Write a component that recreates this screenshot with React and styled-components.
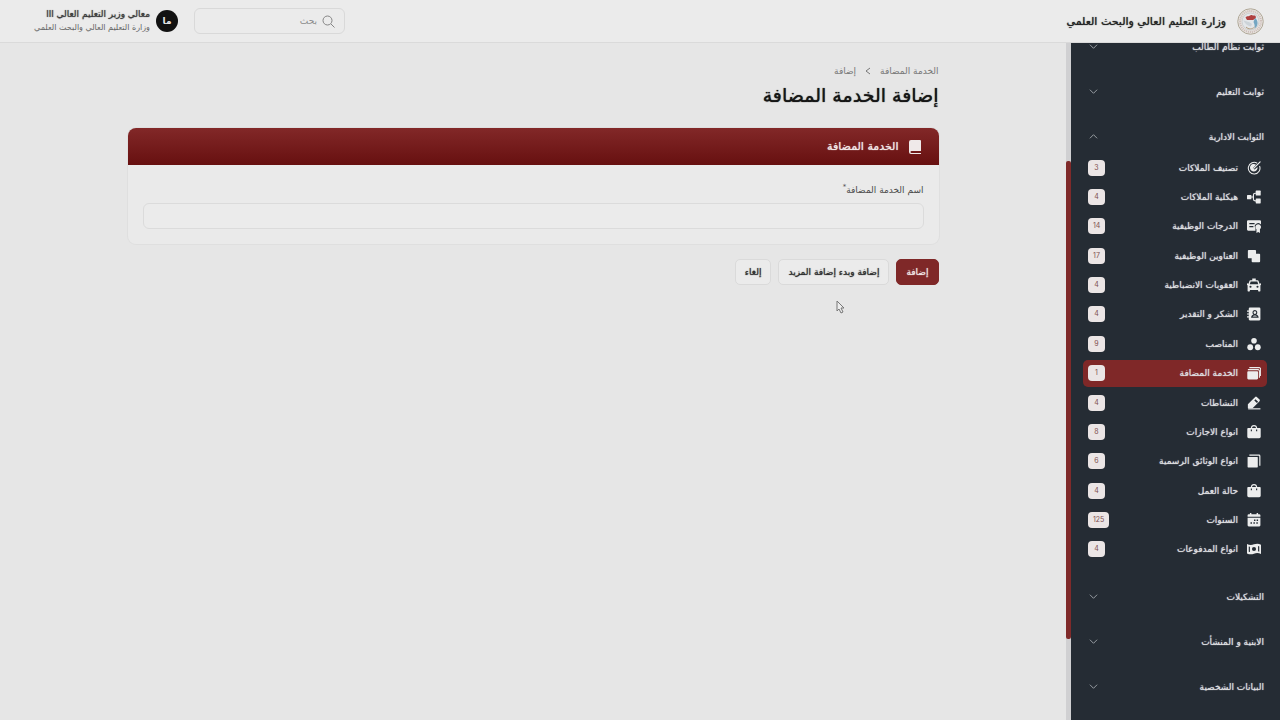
import React from 'react';
import styled, { createGlobalStyle } from 'styled-components';

const before = [
  { label: 'ثوابت نظام الطالب' },
  { label: 'ثوابت التعليم' },
  { label: 'الثوابت الادارية', open: true },
];

const after = [
  { label: 'التشكيلات' },
  { label: 'الابنية و المنشأت' },
  { label: 'البيانات الشخصية' },
];

const items = [
  { label: 'تصنيف الملاكات', icon: 'target', count: 3 },
  { label: 'هيكلية الملاكات', icon: 'tree', count: 4 },
  { label: 'الدرجات الوظيفية', icon: 'certificate', count: 14 },
  { label: 'العناوين الوظيفية', icon: 'union', count: 17 },
  { label: 'العقوبات الانضباطية', icon: 'taxi', count: 4 },
  { label: 'الشكر و التقدير', icon: 'contact', count: 4 },
  { label: 'المناصب', icon: 'circles', count: 9 },
  { label: 'الخدمة المضافة', icon: 'folders', count: 1, active: true },
  { label: 'النشاطات', icon: 'pen', count: 4 },
  { label: 'انواع الاجازات', icon: 'bag', count: 8 },
  { label: 'انواع الوثائق الرسمية', icon: 'stack', count: 6 },
  { label: 'حالة العمل', icon: 'bag', count: 4 },
  { label: 'السنوات', icon: 'calendar', count: 125 },
  { label: 'انواع المدفوعات', icon: 'money', count: 4 },
];

const shapes = {
  target: (
    <>
      <path d="M17.500 3.800A10 10 0 1 0 21.500 8.500" fill="none" stroke="currentColor" strokeWidth="1.800" />
      <path d="M15.500 6.300A6.500 6.500 0 1 0 18 10.300L13 14.500 10 12.500z" />
      <path d="M11.500 12.500 22.500 1.500" stroke="currentColor" strokeWidth="2" strokeLinecap="round" />
    </>
  ),
  tree: (
    <>
      <rect x="0" y="8.500" width="7.500" height="7.500" rx="1" />
      <rect x="15" y="1" width="8.500" height="8.500" rx="1" />
      <rect x="15" y="14.500" width="8.500" height="8.500" rx="1" />
      <path d="M6 12h5M16 5.500h-2a3 3 0 0 0-3 3v7a3 3 0 0 0 3 3h2" fill="none" stroke="currentColor" strokeWidth="2" />
    </>
  ),
  certificate: (
    <>
      <path fillRule="evenodd" d="M2 2h20a2 2 0 0 1 2 2v5.500a5.600 5.600 0 0 0-9.500 6.500v4H2a2 2 0 0 1-2-2V4a2 2 0 0 1 2-2zm2 5v2h9V7zm0 5v2h7v-2z" />
      <path d="M19.200 9a4.800 4.800 0 0 1 3 8.500V24l-3-1.800-3 1.800v-6.500a4.800 4.800 0 0 1 3-8.500z" />
    </>
  ),
  union: <path d="M3 1.500h11a1.500 1.500 0 0 1 1.500 1.500v5H21a1.500 1.500 0 0 1 1.500 1.500V21a1.500 1.500 0 0 1-1.500 1.500H9.500A1.500 1.500 0 0 1 8 21v-5H3a1.500 1.500 0 0 1-1.500-1.500V3A1.500 1.500 0 0 1 3 1.500z" />,
  taxi: (
    <path
      fillRule="evenodd"
      d="M9 1h6v3h3a2 2 0 0 1 2 1.500L21.500 10 24 9v3l-1 .5V22a1 1 0 0 1-1 1h-2a1 1 0 0 1-1-1v-1.500H5V22a1 1 0 0 1-1 1H2a1 1 0 0 1-1-1v-9.500L0 12V9l2.500 1L4 5.500A2 2 0 0 1 6 4h3zM6.300 6 4.800 10.500h14.400L17.700 6zM6 13.200a1.800 1.800 0 1 0 0 3.600 1.800 1.800 0 0 0 0-3.600zm12 0a1.800 1.800 0 1 0 0 3.600 1.800 1.800 0 0 0 0-3.600z"
    />
  ),
  contact: (
    <>
      <path fillRule="evenodd" d="M5 1h16a2 2 0 0 1 2 2v18a2 2 0 0 1-2 2H5a2 2 0 0 1-2-2V3a2 2 0 0 1 2-2zm8.500 4A4.500 4.500 0 0 0 11 13c-2.500 1-4 3-4 5.500h13c0-2.500-1.500-4.500-4-5.500a4.500 4.500 0 0 0-2.500-8zm0 2.200a2.300 2.300 0 1 1 0 4.600 2.300 2.300 0 0 1 0-4.600zm0 7.300c1.800 0 3 .6 3.700 1.800H9.800c.7-1.200 1.900-1.800 3.700-1.800z" />
      <path d="M0 7h4M0 12h4M0 17h4" stroke="currentColor" strokeWidth="2" />
    </>
  ),
  circles: (
    <>
      <circle cx="12" cy="6.500" r="4.800" />
      <circle cx="5.500" cy="17.500" r="5" />
      <circle cx="18.500" cy="17.500" r="5" />
    </>
  ),
  folders: (
    <>
      <path d="M2 9h15.500a1.500 1.500 0 0 1 1.500 1.500V21a2 2 0 0 1-2 2H2.500a2 2 0 0 1-2-2V10.500A1.500 1.500 0 0 1 2 9z" />
      <path d="M1.500 6.200H19a2.300 2.300 0 0 1 2.300 2.300V20M4 2.800h17a2.300 2.300 0 0 1 2.300 2.300V17" fill="none" stroke="currentColor" strokeWidth="1.800" />
    </>
  ),
  pen: (
    <>
      <path fillRule="evenodd" d="M14 1.500a2 2 0 0 1 2.800 0l4.700 4.700a2 2 0 0 1 0 2.800L9.500 21H1.500v-7zm.5 4-2 2 4.500 4.500 2-2z" />
      <path d="M2 22h21" stroke="currentColor" strokeWidth="2" />
    </>
  ),
  bag: (
    <path
      fillRule="evenodd"
      d="M12 0a5.500 5.500 0 0 1 5.500 5H22a1.500 1.500 0 0 1 1.500 1.500V20a2.500 2.500 0 0 1-2.500 2.500H3A2.500 2.500 0 0 1 .5 20V6.500A1.500 1.500 0 0 1 2 5h4.500A5.500 5.500 0 0 1 12 0zm0 2a3.500 3.500 0 0 0-3.500 3h7A3.500 3.500 0 0 0 12 2zM6.500 7.500v3h2v-3zm9 0v3h2v-3z"
    />
  ),
  stack: (
    <>
      <rect x="1" y="5" width="17.500" height="18" rx="1" />
      <path d="M4 2h16.500a1.500 1.500 0 0 1 1.500 1.500V20" fill="none" stroke="currentColor" strokeWidth="2" />
    </>
  ),
  calendar: (
    <path
      fillRule="evenodd"
      d="M5 0h2.500v2h9V0H19v2h2a2 2 0 0 1 2 2v2.500H1V4a2 2 0 0 1 2-2h2zM1 8h22v13a2 2 0 0 1-2 2H3a2 2 0 0 1-2-2zm11 3v2.500h2.500V11zm4.500 0v2.500H19V11zM6 16v2.500h2.500V16zm5 0v2.500h2.500V16zm5 0v2.500h2.500V16z"
    />
  ),
  money: (
    <path
      fillRule="evenodd"
      d="M0 3.500c4 2 8 2 12 .500s8-1.500 12 .5v16c-4-2-8-2-12-.5s-8 1.500-12-.5zM12 8.500a3.500 3.500 0 1 0 0 7 3.500 3.500 0 0 0 0-7zM3 7.500v9l2 .5V8zM21 7.500v9l-2-.5V7z"
    />
  ),
};

function Chevron({ up }) {
  return (
    <ChevronIcon viewBox="0 0 10 10">
      <path d={up ? 'M1 7 5 3l4 4' : 'M1 3l4 4 4-4'} />
    </ChevronIcon>
  );
}

function Group({ group }) {
  return (
    <GroupButton type="button" aria-expanded={!!group.open}>
      {group.label}
      <Chevron up={group.open} />
    </GroupButton>
  );
}

function Emblem() {
  return (
    <svg width="27" height="27" viewBox="0 0 54 54">
      <circle cx="27" cy="27" r="25.500" fill="#e6e2de" stroke="#b0a898" strokeWidth="2" />
      <circle cx="27" cy="27" r="21" fill="none" stroke="#cdbcb8" strokeWidth="4" strokeDasharray="2 2" />
      <circle cx="27" cy="27" r="17" fill="#e3e6e9" stroke="#b3b8bc" />
      <path d="M17 19c3-5 6-1 9-4s5 1 8 0 5 2 3 6l-5 3H20z" fill="#b04040" />
      <path d="M36 20c7 5 7 16-1 21 1-5 0-9-2-13z" fill="#74a6c2" />
      <path d="M13 25c5 2 12 2 17 7l-2 5c-7-2-12-5-15-12z" fill="#ccd3d8" />
      <path d="M18 38c5 5 12 5 17 0" fill="none" stroke="#b39c7c" strokeWidth="2" />
    </svg>
  );
}

function App() {
  return (
    <Page dir="rtl">
      <GlobalStyle />
      <Header>
        <Brand href="#">
          <Emblem />
          وزارة التعليم العالي والبحث العلمي
        </Brand>
        <Account>
          <Search>
            <svg width="13" height="13" viewBox="0 0 13 13" fill="none" stroke="#858585">
              <circle cx="5.500" cy="5.500" r="4.500" />
              <path d="m9 9 3.500 3.500" />
            </svg>
            <SearchInput type="search" aria-label="بحث" placeholder="بحث" />
          </Search>
          <Avatar type="button">ما</Avatar>
          <User>
            <UserName>معالي وزير التعليم العالي ااا</UserName>
            <UserRole>وزارة التعليم العالي والبحث العلمي</UserRole>
          </User>
        </Account>
      </Header>
      <Body>
        <Sidebar>
          {before.map((group) => <Group key={group.label} group={group} />)}
          <ItemList>
            {items.map((item) => (
              <li key={item.label}>
                <ItemLink href="#" $active={item.active}>
                  <ItemIcon viewBox="0 0 24 24">{shapes[item.icon]}</ItemIcon>
                  <ItemLabel>{item.label}</ItemLabel>
                  <Badge>{item.count}</Badge>
                </ItemLink>
              </li>
            ))}
          </ItemList>
          {after.map((group) => <Group key={group.label} group={group} />)}
        </Sidebar>
        <Track>
          <Thumb />
        </Track>
        <Main>
          <Content>
            <Breadcrumb>
              <a href="#">الخدمة المضافة</a>
              <svg width="6" height="8" viewBox="0 0 6 8" fill="none" stroke="currentColor">
                <path d="M5 1 1 4l4 3" />
              </svg>
              <span>إضافة</span>
            </Breadcrumb>
            <Title>إضافة الخدمة المضافة</Title>
            <Card>
              <CardHeader>
                <svg width="14" height="14" viewBox="0 0 14 14">
                  <path d="M3 0h9a1 1 0 0 1 1 1v10H3z" fill="#efe9e9" />
                  <path d="M3 0a2 2 0 0 0-2 2v10a2 2 0 0 0 2 2h10v-1H3.500a1 1 0 0 1 0-2H13V9H3z" fill="#efe9e9" />
                </svg>
                <CardTitle>الخدمة المضافة</CardTitle>
              </CardHeader>
              <CardBody>
                <Label htmlFor="service-name">
                  اسم الخدمة المضافة<sup>*</sup>
                </Label>
                <TextInput id="service-name" type="text" />
              </CardBody>
            </Card>
            <Actions>
              <Button type="submit" $primary>إضافة</Button>
              <Button type="button">إضافة وبدء إضافة المزيد</Button>
              <Button type="button">إلغاء</Button>
            </Actions>
          </Content>
        </Main>
      </Body>
      <Pointer viewBox="0 0 9 14">
        <path d="M1 1v10l2-2 2 4 2-1-2-4h3z" />
      </Pointer>
    </Page>
  );
}

export default App;

const GlobalStyle = createGlobalStyle`
  * {
    box-sizing: border-box;
  }
  body {
    margin: 0;
    background: #e6e6e6;
    font-family: "DejaVu Sans", sans-serif;
  }
  button, input {
    font-family: inherit;
  }
  a {
    color: inherit;
    text-decoration: none;
  }
`;

const Page = styled.div`
  position: relative;
  display: flex;
  flex-direction: column;
  height: 100vh;
  overflow: hidden;
  white-space: nowrap;
`;

const Header = styled.header`
  position: relative;
  z-index: 1;
  display: flex;
  flex: none;
  align-items: center;
  justify-content: space-between;
  height: 43px;
  padding: 0 16px 0 34px;
  background: #ebebeb;
  border-bottom: 1px solid #dadada;
`;

const Brand = styled.a`
  display: flex;
  align-items: center;
  gap: 11px;
  color: #222;
  font-size: 11px;
  text-shadow: 0 0 1px #222;
`;

const Account = styled.div`
  display: flex;
  align-items: center;
`;

const Search = styled.label`
  display: flex;
  align-items: center;
  gap: 5px;
  width: 151px;
  height: 26px;
  margin-left: 16px;
  padding: 0 9px;
  border: 1px solid #d9d9d9;
  border-radius: 6px;
`;

const SearchInput = styled.input`
  flex: 1;
  min-width: 0;
  padding: 0;
  border: 0;
  outline: 0;
  background: none;
  font-size: 9px;
  &::placeholder {
    color: #8c8c8c;
  }
`;

const Avatar = styled.button`
  width: 22px;
  height: 22px;
  margin-left: 6px;
  padding: 0;
  border: 0;
  border-radius: 50%;
  background: #121212;
  color: #e6e6e6;
  font-size: 9px;
  font-weight: bold;
`;

const User = styled.div`
  min-width: 115px;
`;

const UserName = styled.div`
  color: #3c3c3c;
  font-size: 9px;
  line-height: 14px;
  text-shadow: 0 0 1px #3c3c3c;
`;

const UserRole = styled.div`
  color: #666;
  font-size: 8px;
  line-height: 14px;
`;

const Body = styled.div`
  display: flex;
  flex: 1;
  min-height: 0;
`;

const Sidebar = styled.nav`
  display: flex;
  flex: none;
  flex-direction: column;
  gap: 18px;
  width: 209px;
  margin-top: -10px;
  padding: 0 13px 0 12px;
  background: #252c34;
`;

const GroupButton = styled.button`
  display: flex;
  flex: none;
  align-items: center;
  justify-content: space-between;
  height: 27px;
  padding: 0 3px 0 6px;
  border: 0;
  background: none;
  color: #dedfe1;
  font-size: 9px;
  text-shadow: 0 0 1px #dedfe1;
`;

const ChevronIcon = styled.svg`
  width: 9px;
  height: 9px;
  fill: none;
  stroke: #a4a9ae;
`;

const ItemList = styled.ul`
  display: grid;
  grid-auto-rows: 1fr;
  flex: none;
  align-items: center;
  min-height: 411px;
  margin: -15px 0 1px;
  padding: 0;
  list-style: none;
`;

const ItemLink = styled.a`
  display: flex;
  align-items: center;
  gap: 9px;
  height: 27px;
  padding: 0 6px 0 5px;
  border-radius: 5px;
  background: ${(props) => (props.$active ? '#7f2828' : 'transparent')};
  color: #dedfe1;
  font-size: 9px;
  text-shadow: 0 0 1px #dedfe1;
`;

const ItemIcon = styled.svg`
  width: 14px;
  height: 14px;
  color: #eceded;
  fill: currentColor;
`;

const ItemLabel = styled.span`
  flex: 1;
`;

const Badge = styled.span`
  min-width: 17px;
  padding: 0 5px;
  border-radius: 4px;
  background: #ebe5e5;
  color: #80504f;
  font-family: Inter, sans-serif;
  font-size: 7px;
  line-height: 16px;
  text-align: center;
  text-shadow: none;
`;

const Track = styled.div`
  display: grid;
  grid-template-rows: 118fr 478fr 81fr;
  flex: none;
  width: 5px;
  background: #d0d0d2;
`;

const Thumb = styled.div`
  grid-row: 2;
  border-radius: 2px;
  background: #7f2a2a;
`;

const Main = styled.main`
  flex: 1;
  min-width: 0;
  padding: 20px 16px;
`;

const Content = styled.div`
  max-width: 811px;
  margin: 0 auto;
`;

const Breadcrumb = styled.nav`
  display: flex;
  align-items: center;
  gap: 9px;
  height: 16px;
  color: #777;
  font-size: 9px;
`;

const Title = styled.h1`
  margin: 0 0 17px;
  color: #161616;
  font-size: 19px;
  font-weight: normal;
  line-height: 32px;
  text-shadow: 0 0 1px #161616;
`;

const Card = styled.section`
  overflow: hidden;
  border-radius: 8px;
  background: #eaeaea;
  box-shadow: 0 0 0 1px #dfdfdf;
`;

const CardHeader = styled.header`
  display: flex;
  align-items: center;
  gap: 9px;
  height: 37px;
  padding: 0 17px;
  background: linear-gradient(#822828, #671010);
`;

const CardTitle = styled.h2`
  margin: 0;
  color: #efe6e6;
  font-size: 11px;
  font-weight: normal;
  text-shadow: 0 0 1px #efe6e6;
`;

const CardBody = styled.div`
  padding: 16px 15px 15px;
`;

const Label = styled.label`
  display: block;
  margin-bottom: 4px;
  color: #4a4a4a;
  font-size: 9px;
  line-height: 18px;
  sup {
    font-size: 7px;
    line-height: 0;
  }
`;

const TextInput = styled.input`
  display: block;
  width: 100%;
  height: 26px;
  padding: 0 9px;
  border: 1px solid #dbdbdb;
  border-radius: 6px;
  background: #ebebeb;
  font-size: 10px;
`;

const Actions = styled.div`
  display: flex;
  gap: 7px;
  margin-top: 15px;
`;

const Button = styled.button`
  height: 26px;
  padding: 0 9px;
  border: 1px solid ${(props) => (props.$primary ? '#7f2828' : '#dadada')};
  border-radius: 5px;
  background: ${(props) => (props.$primary ? '#7f2828' : '#ebebeb')};
  color: ${(props) => (props.$primary ? '#efe6e6' : '#2e2e2e')};
  font-size: 9px;
  text-shadow: 0 0 1px ${(props) => (props.$primary ? '#efe6e6' : '#2e2e2e')};
`;

const Pointer = styled.svg`
  position: absolute;
  top: 300px;
  left: 836px;
  width: 9px;
  height: 14px;
  fill: #ededed;
  stroke: #777;
`;
